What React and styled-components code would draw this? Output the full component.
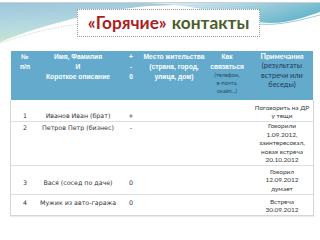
import React from "react";
import styled, { createGlobalStyle } from "styled-components";

const Global = createGlobalStyle`
  html, body { margin: 0; padding: 0; background: #ffffff; }
  body { width: 320px; height: 240px; overflow: hidden; }
`;

const Page = styled.div`
  position: relative;
  width: 320px;
  height: 240px;
  overflow: hidden;
  background: #ffffff;
`;

const Decor = styled.svg`
  position: absolute;
  left: 0;
  top: 0;
  width: 320px;
  height: 50px;
  z-index: 0;
`;

const Content = styled.div`
  position: relative;
  z-index: 1;
  display: flex;
  flex-direction: column;
  padding-top: 9px;
`;

const TitleRow = styled.div`
  display: flex;
  padding-left: 77px;
`;

const TitleBox = styled.h1`
  margin: 0;
  box-sizing: border-box;
  width: 183px;
  height: 28px;
  border: 1px dotted #9a9a9a;
  background: #ffffff;
  display: flex;
  align-items: center;
  justify-content: center;
  gap: 5px;
  font-family: Lato, "Open Sans", sans-serif;
  font-weight: 700;
  font-size: 17.3px;
  line-height: 1;
  padding-bottom: 1px;
`;

const Word = styled.span`
  color: ${(p) => p.$color};
`;

const Table = styled.div`
  margin: 14px 0 0 11px;
  width: 302px;
  display: flex;
  flex-direction: column;
`;

const cols = "28px 78px 28px 58px 48px 62px";

const HeadRow = styled.div`
  display: grid;
  grid-template-columns: ${cols};
  height: 49px;
  background: #64aacd;
`;

const HeadCell = styled.div`
  padding-top: 1px;
  display: flex;
  flex-direction: column;
  align-items: center;
  text-align: center;
  font-family: "Liberation Sans", Arial, sans-serif;
  font-weight: 700;
  font-size: 6.7px;
  line-height: 10px;
  color: #ffffff;
  white-space: nowrap;
`;

const HeadLine = styled.div`
  line-height: ${(p) => p.$lh || 10}px;
`;

const SubLine = styled.div`
  font-family: Lato, sans-serif;
  font-weight: 400;
  font-size: 5.6px;
  line-height: 8px;
  color: #234a63;
`;

const NoteHead = styled.div`
  padding-top: 1px;
  display: flex;
  flex-direction: column;
  align-items: center;
  text-align: center;
  font-family: Lato, sans-serif;
  font-size: 7.4px;
  line-height: 9.3px;
  white-space: nowrap;
`;

const NoteTitle = styled.div`
  font-weight: 700;
  color: #ffffff;
`;

const NoteSub = styled.div`
  font-weight: 400;
  color: #1c3a55;
`;

const Body = styled.div`
  display: flex;
  flex-direction: column;
  border: 1px solid #d6d6d6;
  border-top: none;
  box-shadow: 0 1px 1px rgba(0, 0, 0, 0.08);
  margin-left: -1px;
  margin-right: -1px;
`;

const Row = styled.div`
  display: grid;
  grid-template-columns: ${cols};
  box-sizing: border-box;
  height: ${(p) => p.$h}px;
  border-bottom: ${(p) => (p.$last ? "none" : "1px solid #dedede")};
`;

const Cell = styled.div`
  padding-top: ${(p) => p.$pad}px;
  text-align: center;
  font-family: "DejaVu Sans", Verdana, sans-serif;
  font-size: 6.3px;
  line-height: 9px;
  color: #333333;
  white-space: nowrap;
`;

const NoteCell = styled.div`
  padding-top: ${(p) => p.$pad}px;
  text-align: center;
  font-family: Lato, sans-serif;
  font-size: 6.5px;
  line-height: 8.6px;
  color: #3a3a3a;
`;

const rows = [
  { n: "1", name: "Иванов Иван (брат)", mark: "+", h: 22, pad: 10.5, notePad: 3.7, note: ["Поговорить на ДР", "у тещи"] },
  { n: "2", name: "Петров Петр (бизнес)", mark: "-", h: 44, pad: 0.5, notePad: 0, note: ["Говорили", "1.09.2012,", "заинтересовал,", "новая встреча", "20.10.2012"] },
  { n: "3", name: "Вася (сосед по даче)", mark: "0", h: 29, pad: 11.5, notePad: 1.7, note: ["Говорил", "12.09.2012", "думает"] },
  { n: "4", name: "Мужик из авто-гаража", mark: "0", h: 20, pad: 2.5, notePad: 2.7, note: ["Встреча", "30.09.2012"] },
];

export default function App() {
  return (
    <Page>
      <Global />
      <Decor viewBox="0 0 320 50">
        <defs>
          <linearGradient id="sky" x1="0" y1="0" x2="0.3" y2="1">
            <stop offset="0" stopColor="#9cc6dc" />
            <stop offset="0.6" stopColor="#b7dbe0" />
            <stop offset="1" stopColor="#c9e9c6" />
          </linearGradient>
          <linearGradient id="swoosh" x1="0" y1="0" x2="1" y2="0.4">
            <stop offset="0" stopColor="#e4f0f5" />
            <stop offset="0.5" stopColor="#a9d3e2" />
            <stop offset="1" stopColor="#6db7cc" />
          </linearGradient>
        </defs>
        <line x1="0" y1="2.5" x2="320" y2="2.5" stroke="#cfcfcf" strokeWidth="1" />
        <path d="M0,3 H320 V5 C260,6 200,3 150,6 C100,10 45,24 0,42 Z" fill="url(#sky)" />
        <path d="M0,43 C30,33 55,27 80,24" fill="none" stroke="#b9c4c8" strokeWidth="0.6" strokeDasharray="1.5 1" />
        <path d="M150,3 C205,6 232,17 258,22 C282,26 302,18 320,12 V3 Z" fill="url(#swoosh)" />
        <path d="M258,24 C280,26 300,20 320,15" fill="none" stroke="#7fbfd4" strokeWidth="0.8" />
      </Decor>
      <Content>
        <TitleRow>
          <TitleBox>
            <Word $color="#ad1e1e">«Горячие»</Word>
            <Word $color="#4b5d2b">контакты</Word>
          </TitleBox>
        </TitleRow>
        <Table>
          <HeadRow>
            <HeadCell>
              <HeadLine>№</HeadLine>
              <HeadLine>п/п</HeadLine>
            </HeadCell>
            <HeadCell>
              <HeadLine>Имя, Фамилия</HeadLine>
              <HeadLine>И</HeadLine>
              <HeadLine>Короткое описание</HeadLine>
            </HeadCell>
            <HeadCell>
              <HeadLine>+</HeadLine>
              <HeadLine>-</HeadLine>
              <HeadLine>0</HeadLine>
            </HeadCell>
            <HeadCell>
              <HeadLine>Место жительства</HeadLine>
              <HeadLine>(страна, город,</HeadLine>
              <HeadLine>улица, дом)</HeadLine>
            </HeadCell>
            <HeadCell>
              <HeadLine $lh={9.5}>Как</HeadLine>
              <HeadLine $lh={9.5}>связаться</HeadLine>
              <SubLine>(телефон,</SubLine>
              <SubLine>е-почта,</SubLine>
              <SubLine>скайп...)</SubLine>
            </HeadCell>
            <NoteHead>
              <NoteTitle>Примечания</NoteTitle>
              <NoteSub>(результаты</NoteSub>
              <NoteSub>встречи или</NoteSub>
              <NoteSub>беседы)</NoteSub>
            </NoteHead>
          </HeadRow>
          <Body>
            {rows.map((r, i) => (
              <Row key={r.n} $h={r.h} $last={i === rows.length - 1}>
                <Cell $pad={r.pad}>{r.n}</Cell>
                <Cell $pad={r.pad}>{r.name}</Cell>
                <Cell $pad={r.pad}>{r.mark}</Cell>
                <Cell $pad={r.pad} />
                <Cell $pad={r.pad} />
                <NoteCell $pad={r.notePad}>
                  {r.note.map((l) => (
                    <div key={l}>{l}</div>
                  ))}
                </NoteCell>
              </Row>
            ))}
          </Body>
        </Table>
      </Content>
    </Page>
  );
}
